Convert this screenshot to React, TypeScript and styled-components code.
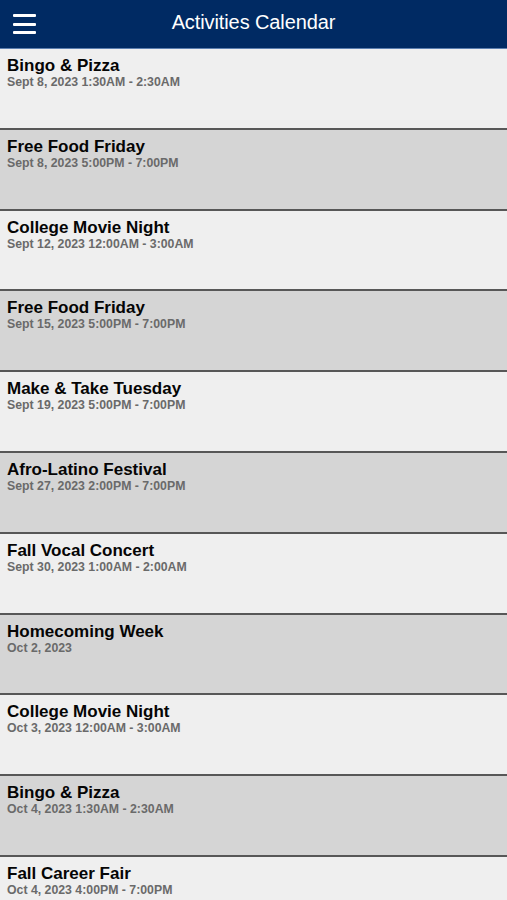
import React from "react";
import styled, { createGlobalStyle } from "styled-components";

const GlobalStyle = createGlobalStyle`
  html, body {
    margin: 0;
    padding: 0;
    background: #efefef;
    font-family: "Liberation Sans", Arial, Helvetica, sans-serif;
  }
`;

type Activity = { title: string; when: string };

const activities: Activity[] = [
  { title: "Bingo & Pizza", when: "Sept 8, 2023 1:30AM - 2:30AM" },
  { title: "Free Food Friday", when: "Sept 8, 2023 5:00PM - 7:00PM" },
  { title: "College Movie Night", when: "Sept 12, 2023 12:00AM - 3:00AM" },
  { title: "Free Food Friday", when: "Sept 15, 2023 5:00PM - 7:00PM" },
  { title: "Make & Take Tuesday", when: "Sept 19, 2023 5:00PM - 7:00PM" },
  { title: "Afro-Latino Festival", when: "Sept 27, 2023 2:00PM - 7:00PM" },
  { title: "Fall Vocal Concert", when: "Sept 30, 2023 1:00AM - 2:00AM" },
  { title: "Homecoming Week", when: "Oct 2, 2023" },
  { title: "College Movie Night", when: "Oct 3, 2023 12:00AM - 3:00AM" },
  { title: "Bingo & Pizza", when: "Oct 4, 2023 1:30AM - 2:30AM" },
  { title: "Fall Career Fair", when: "Oct 4, 2023 4:00PM - 7:00PM" },
];

const Page = styled.div`
  width: 507px;
  height: 900px;
  overflow: hidden;
  display: flex;
  flex-direction: column;
  background: #efefef;
`;

const TopBar = styled.header`
  flex: none;
  height: 49px;
  padding-bottom: 3px;
  box-sizing: border-box;
  background: #002a63;
  border-bottom: 1px solid #5d7fb0;
  display: flex;
  align-items: center;
  justify-content: center;
  position: relative;
`;

const MenuButton = styled.button`
  position: absolute;
  left: 13px;
  top: 14px;
  width: 23px;
  height: 20px;
  padding: 0;
  border: none;
  background: none;
  display: flex;
  flex-direction: column;
  justify-content: space-between;
  cursor: pointer;
`;

const MenuBar = styled.span`
  display: block;
  height: 3px;
  width: 100%;
  background: #ffffff;
  border-radius: 1px;
`;

const Title = styled.h1`
  margin: 0;
  color: #ffffff;
  font-size: 20px;
  font-weight: normal;
  letter-spacing: -0.1px;
`;

const List = styled.ul`
  list-style: none;
  margin: 0;
  padding: 0;
`;

const Row = styled.li<{ $shaded: boolean }>`
  box-sizing: border-box;
  height: 80.8px;
  padding: 7px 7px 0;
  background: ${(p) => (p.$shaded ? "#d5d5d5" : "#efefef")};
  border-bottom: 2px solid #575757;
`;

const EventName = styled.div`
  font-size: 17px;
  font-weight: bold;
  color: #050505;
  line-height: 19px;
`;

const EventTime = styled.div`
  font-size: 12.3px;
  font-weight: bold;
  color: #6a6a6a;
  line-height: 14px;
`;

export default function App() {
  return (
    <>
      <GlobalStyle />
      <Page>
        <TopBar>
          <MenuButton aria-label="menu">
            <MenuBar />
            <MenuBar />
            <MenuBar />
          </MenuButton>
          <Title>Activities Calendar</Title>
        </TopBar>
        <List>
          {activities.map((a, i) => (
            <Row key={i} $shaded={i % 2 === 1}>
              <EventName>{a.title}</EventName>
              <EventTime>{a.when}</EventTime>
            </Row>
          ))}
        </List>
      </Page>
    </>
  );
}
